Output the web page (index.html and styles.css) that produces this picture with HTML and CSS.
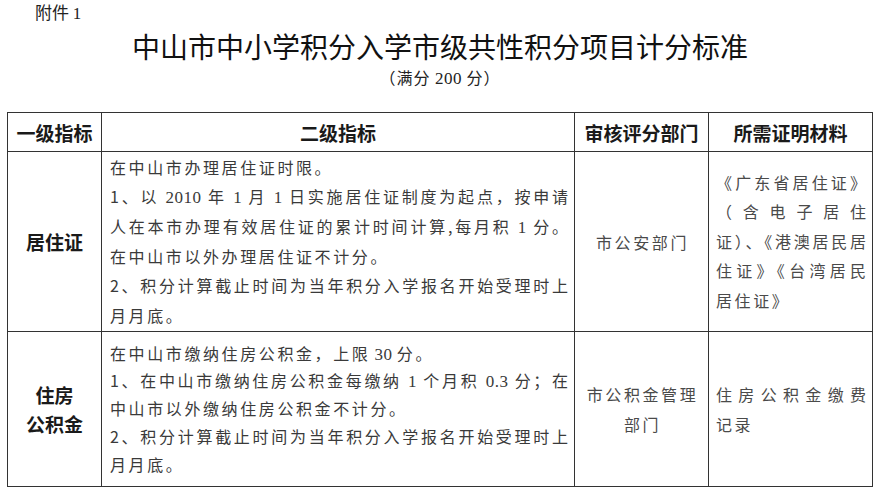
FILE: index.html
```html
<!DOCTYPE html>
<html lang="zh-CN">
<head>
<meta charset="utf-8">
<link rel="stylesheet" href="styles.css">
</head>
<body>
<div class="page">
  <div class="annex">附件 <span class="num">1</span></div>
  <h1 class="title">中山市中小学积分入学市级共性积分项目计分标准</h1>
  <div class="subtitle">（满分 <span class="num">200</span> 分）</div>
  <div class="grid">
    <div class="cell head">一级指标</div>
    <div class="cell head">二级指标</div>
    <div class="cell head">审核评分部门</div>
    <div class="cell head">所需证明材料</div>

    <div class="cell item r1">居住证</div>
    <div class="cell desc r1">
      <div class="ln">在中山市办理居住证时限。</div>
      <div class="ln full">1、以 <span class="num">2010</span> 年 <span class="num">1</span> 月 <span class="num">1</span> 日实施居住证制度为起点，按申请</div>
      <div class="ln full">人在本市办理有效居住证的累计时间计算,每月积 <span class="num">1</span> 分。</div>
      <div class="ln">在中山市以外办理居住证不计分。</div>
      <div class="ln full">2、积分计算截止时间为当年积分入学报名开始受理时上</div>
      <div class="ln">月月底。</div>
    </div>
    <div class="cell dept r1"><div class="ln">市公安部门</div></div>
    <div class="cell proof r1">
      <div class="ln full">《广东省居住证》</div>
      <div class="ln full">（含电子居住</div>
      <div class="ln full">证）、《港澳居民居</div>
      <div class="ln full">住证》《台湾居民</div>
      <div class="ln">居住证》</div>
    </div>

    <div class="cell item r2"><div>住房</div><div>公积金</div></div>
    <div class="cell desc r2">
      <div class="ln">在中山市缴纳住房公积金，上限 <span class="num">30</span> 分。</div>
      <div class="ln full">1、在中山市缴纳住房公积金每缴纳 <span class="num">1</span> 个月积 <span class="num">0.3</span> 分；在</div>
      <div class="ln">中山市以外缴纳住房公积金不计分。</div>
      <div class="ln full">2、积分计算截止时间为当年积分入学报名开始受理时上</div>
      <div class="ln">月月底。</div>
    </div>
    <div class="cell dept r2"><div class="ln">市公积金管理</div><div class="ln">部门</div></div>
    <div class="cell proof r2">
      <div class="ln full">住房公积金缴费</div>
      <div class="ln">记录</div>
    </div>
  </div>
</div>
</body>
</html>
```

FILE: styles.css
```css
* { box-sizing: border-box; }
html, body { margin: 0; padding: 0; background: #ffffff; }
body {
  width: 880px;
  height: 495px;
  overflow: hidden;
  font-family: "Noto Sans CJK SC", sans-serif;
  color: #333;
}
.num {
  font-family: "Liberation Serif", serif;
  font-size: 17px;
  line-height: 1;
  letter-spacing: 0.5px;
}
.page { padding-top: 1px; }
.annex {
  padding-left: 35px;
  font-size: 17px;
  line-height: 22px;
  color: #222;
}
.title {
  margin: 5px 0 0 0;
  text-align: center;
  font-weight: 400;
  font-size: 28px;
  line-height: 36px;
  color: #111;
}
.subtitle {
  text-align: center;
  font-size: 16px;
  line-height: 26px;
  color: #222;
  padding-left: 0;
  letter-spacing: 1px;
}
.grid {
  margin: 22px 0 0 7px;
  width: 866px;
  display: grid;
  grid-template-columns: 94px 473px 134px 164px;
  grid-template-rows: 39px 180px 155px;
  border-left: 1px solid #333;
  border-top: 1px solid #333;
}
.cell {
  border-right: 1px solid #333;
  border-bottom: 1px solid #333;
  display: flex;
  flex-direction: column;
  justify-content: center;
}
.head, .item {
  align-items: center;
  font-weight: 700;
  font-size: 19px;
  color: #1a1a1a;
}
.item { line-height: 29px; }
.desc {
  padding: 0 6px 0 8px;
  font-size: 16px;
  color: #3a3a3a;
}
.desc.r1 { line-height: 29.6px; }
.desc.r2 { line-height: 27.8px; }
.ln {
  letter-spacing: 2.6px;
  word-spacing: -2px;
  white-space: nowrap;
}
.ln.full {
  letter-spacing: 0;
  word-spacing: 0;
  white-space: normal;
  text-align: justify;
  text-align-last: justify;
}
.dept {
  align-items: center;
  font-size: 16px;
  line-height: 30px;
  color: #4a4a4a;
}
.dept .ln { letter-spacing: 2.6px; padding-left: 2px; }
.proof {
  padding: 0 6px 0 7px;
  font-size: 16px;
  color: #4a4a4a;
}
.proof.r1 { line-height: 29.5px; }
.proof.r2 { line-height: 30px; }
```
